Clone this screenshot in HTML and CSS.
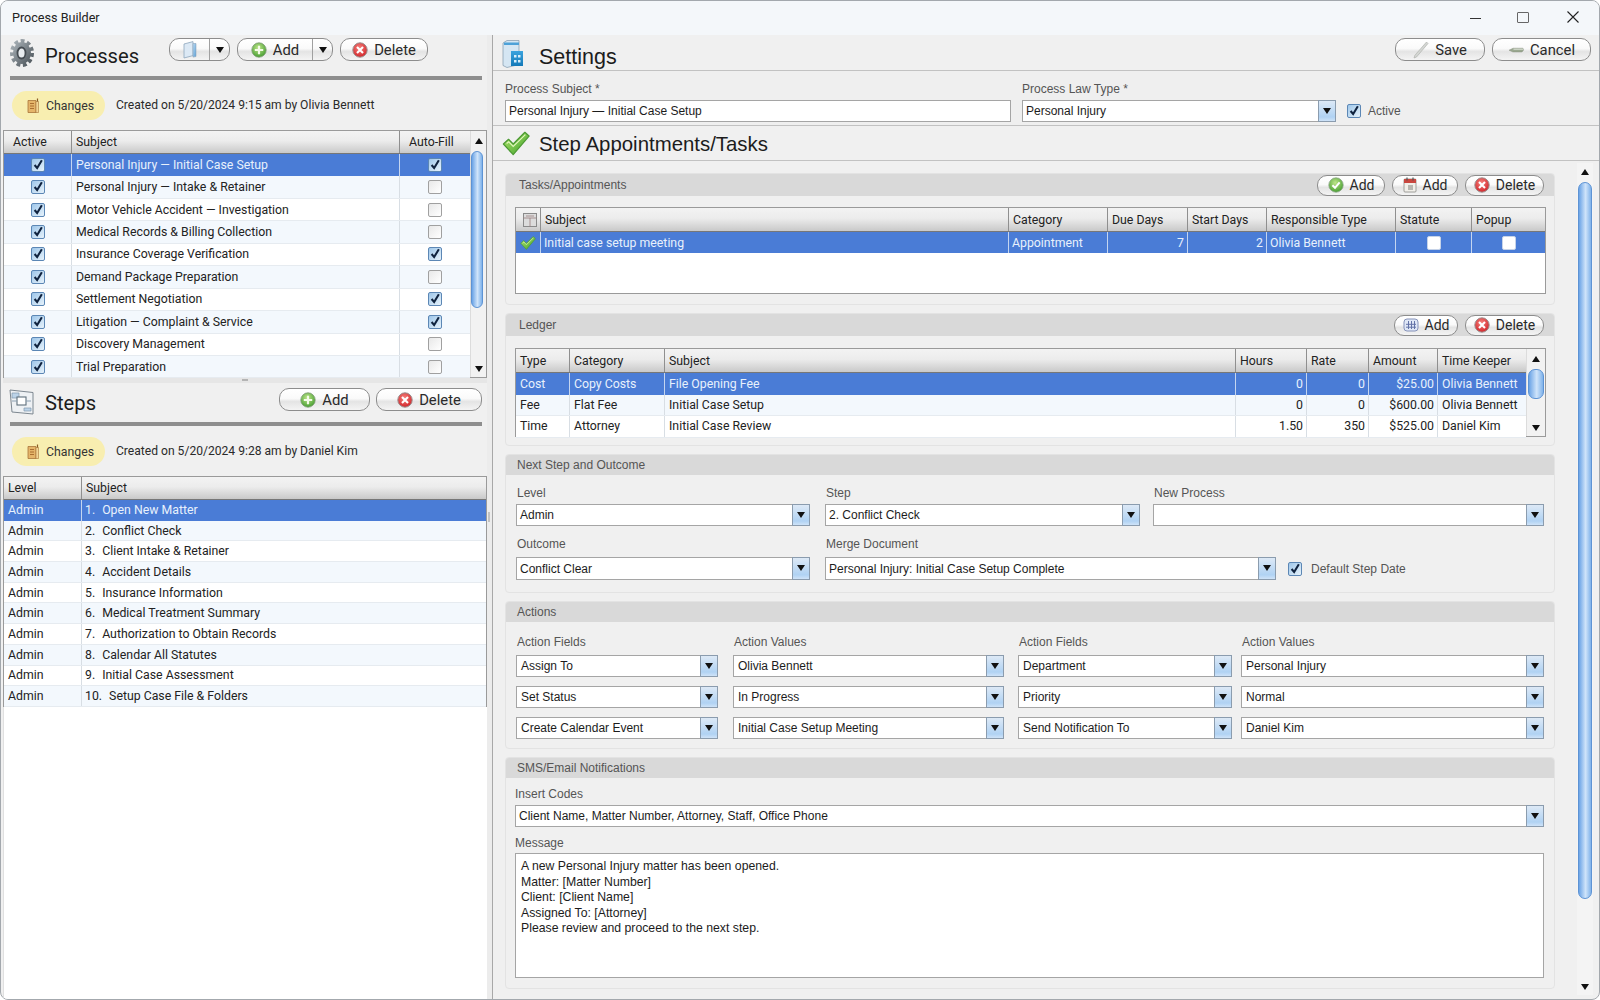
FILE: index.html
```html
<!DOCTYPE html>
<html lang="en">
<head>
  <meta charset="UTF-8" />
  <title>Process Builder</title>
  <link rel="stylesheet" href="styles.css">
</head>
<body>
  <svg class="defs" xmlns="http://www.w3.org/2000/svg">
    <defs>
      <radialGradient id="gGreen" cx="45%" cy="35%" r="70%"><stop offset="0" stop-color="#bfe58a"/><stop offset="1" stop-color="#3f9a2c"/></radialGradient>
      <radialGradient id="gRed" cx="45%" cy="35%" r="70%"><stop offset="0" stop-color="#f5817c"/><stop offset="1" stop-color="#cf1f25"/></radialGradient>
      <linearGradient id="gCheck" x1="0" y1="0" x2="1" y2="1"><stop offset="0" stop-color="#b4e86c"/><stop offset="1" stop-color="#3c9e2a"/></linearGradient>
      <linearGradient id="gGear" x1="0" y1="0" x2="1" y2="1"><stop offset="0" stop-color="#a9b2b8"/><stop offset="1" stop-color="#4e565c"/></linearGradient>
      <linearGradient id="gBlue" x1="0" y1="0" x2="1" y2="1"><stop offset="0" stop-color="#bcdcf4"/><stop offset="1" stop-color="#5a9fd6"/></linearGradient>
      <linearGradient id="gPanel" x1="0" y1="0" x2="0" y2="1"><stop offset="0" stop-color="#3aa3de"/><stop offset="1" stop-color="#1479b8"/></linearGradient>
      <symbol id="i-plus" viewBox="0 0 16 16"><circle cx="8" cy="8" r="7.2" fill="url(#gGreen)" stroke="#7d9a74" stroke-width=".8"/><path d="M8 3.8v8.4M3.8 8h8.4" stroke="#f4fbe9" stroke-width="2.2"/></symbol>
      <symbol id="i-del" viewBox="0 0 16 16"><circle cx="8" cy="8" r="7.2" fill="url(#gRed)" stroke="#9a8f8f" stroke-width="1"/><path d="M5 5l6 6M11 5l-6 6" stroke="#fff" stroke-width="2.1"/></symbol>
      <symbol id="i-okc" viewBox="0 0 16 16"><circle cx="8" cy="8" r="7.2" fill="url(#gGreen)" stroke="#8aa585" stroke-width=".8"/><path d="M4.4 8.2l2.600 2.600 4.600-5.400" fill="none" stroke="#fff" stroke-width="2"/></symbol>
      <symbol id="i-book" viewBox="0 0 16 18"><path d="M2 3l9-2.400v14L2 17z" fill="#dce9f5" stroke="#8ea6bd" stroke-width=".8"/><path d="M11 2.500h3v13l-3 .6z" fill="url(#gBlue)" stroke="#8ea6bd" stroke-width=".6"/></symbol>
      <symbol id="i-scroll" viewBox="0 0 14 16"><path d="M2 2.500h8v12H2z" fill="#e5b56a" stroke="#a8753a" stroke-width=".8"/><path d="M10 3.500h2.500v11H10z" fill="#f3d697" stroke="#a8753a" stroke-width=".6"/><path d="M4 5.500h4M4 8h4M4 10.500h4" stroke="#a3662a" stroke-width=".9"/><path d="M11.500 .5v3" stroke="#8a5a25" stroke-width="1.200"/></symbol>
      <symbol id="i-pencil" viewBox="0 0 16 18"><path d="M13.500 1L15 2.500 3.500 16 1 17l.8-2.600z" fill="#d4d6d3" stroke="#a9aca8" stroke-width=".6"/></symbol>
      <symbol id="i-cancel" viewBox="0 0 16 8"><path d="M1 4.200L5 2.200h10l.5 2L14 6H5z" fill="#9aa890" stroke="#7d8776" stroke-width=".4"/><path d="M5.500 3.200H15" stroke="#e7ebe2" stroke-width=".9"/></symbol>
      <symbol id="i-cal" viewBox="0 0 14 16"><rect x="1" y="2" width="12" height="13" rx="1" fill="#f1efe9" stroke="#8c8a85" stroke-width=".8"/><rect x="1" y="2" width="12" height="4" fill="#c9473f"/><path d="M4 .6v3M10 .6v3" stroke="#555" stroke-width="1.200"/><rect x="5" y="8" width="5" height="5" fill="#b8b7b1"/></symbol>
      <symbol id="i-grid" viewBox="0 0 16 16"><rect x="1" y="2" width="14" height="12" rx="3" fill="#dfe7f6" stroke="#8693ba" stroke-width="1"/><path d="M5.500 4v8M8.500 4v8M11.500 4v8M3 7.300h10M3 10.200h10" stroke="#6474a8" stroke-width="1"/></symbol>
      <symbol id="i-check" viewBox="0 0 30 26"><path d="M1.500 13.500L7 8.500l5 5L24.500 1 29 5 12 25z" fill="url(#gCheck)" stroke="#4d9a34" stroke-width="1.300" stroke-linejoin="round"/><path d="M5 13l2.200-1.800 4.800 5L25 3.500" fill="none" stroke="#e2f8bd" stroke-width="1.200"/></symbol>
      <symbol id="i-gear" viewBox="0 0 26 30"><ellipse cx="13" cy="15" rx="9.500" ry="11.500" fill="none" stroke="url(#gGear)" stroke-width="5" stroke-dasharray="3.600 2.400"/><ellipse cx="13" cy="15" rx="9" ry="11" fill="url(#gGear)"/><ellipse cx="12.500" cy="15" rx="4" ry="5.500" fill="#e8ecef" stroke="#454c52" stroke-width="1.800"/></symbol>
      <symbol id="i-steps" viewBox="0 0 26 28"><path d="M1 2l23 2.500V26L3 24z" fill="#eef1f4" stroke="#7d8790" stroke-width="1"/><path d="M3 5h7v5H3zM15 20h7v3h-7z" fill="#bcd3e8" stroke="#8299ad" stroke-width=".7"/><rect x="8" y="9" width="9" height="8" fill="#fff" stroke="#5f6f7c" stroke-width="1.100"/><path d="M3 13h5M17 13h5" stroke="#8ca0b2" stroke-width="1"/></symbol>
      <symbol id="i-settings" viewBox="0 0 22 28"><path d="M1 3l4-2.500h12v24l-12 3-4-2z" fill="#d5e6f3" stroke="#7e97ab" stroke-width=".7"/><path d="M2 2.500h15v2.500H2z" fill="#4da1d8"/><rect x="9" y="11" width="12" height="15" fill="url(#gPanel)"/><path d="M12 15h2.500v2.500H12zM16 15h2.500v2.500H16zM12 20h2.500v2.500H12zM16 20h2.500v2.500H16z" fill="#d9eefb"/></symbol>
      <symbol id="i-tick" viewBox="0 0 14 14"><path d="M3 7l3 3.500L11.500 1.500" fill="none" stroke="#10233f" stroke-width="2.400"/></symbol>
      <symbol id="i-head" viewBox="0 0 16 16"><rect x="1.500" y="1.500" width="13" height="13" fill="#dcdcdc" stroke="#8a8a8a"/><path d="M1.500 6h13M8 6v8.500M4 4h8" stroke="#9a7f7f" stroke-width=".8"/></symbol>
    </defs>
  </svg>

  <div class="window">
    <div class="titlebar">
      <span class="app-title">Process Builder</span>
      <div class="win-btns">
        <span class="win-min"></span>
        <span class="win-max"></span>
        <svg class="win-close" viewBox="0 0 12 12"><path d="M.5.500l11 11M11.500.5l-11 11" stroke="#222" stroke-width="1.100"/></svg>
      </div>
    </div>

    <div class="content">
      <div class="left">
        <div class="proc-head">
          <svg class="head-icon"><use href="#i-gear"/></svg>
          <h1 class="title">Processes</h1>
          <div class="head-btns">
            <span class="btn btn-book"><span class="btn-main"><svg class="ic16 tall"><use href="#i-book"/></svg></span><span class="btn-drop"><i class="tri-down"></i></span></span>
            <span class="btn btn-add"><span class="btn-main"><svg class="ic16"><use href="#i-plus"/></svg>Add</span><span class="btn-drop"><i class="tri-down"></i></span></span>
            <span class="btn btn-del"><span class="btn-main"><svg class="ic16"><use href="#i-del"/></svg>Delete</span></span>
          </div>
        </div>
        <div class="rule"></div>
        <div class="changes">
          <span class="pill"><svg class="ic-scroll"><use href="#i-scroll"/></svg>Changes</span>
          <span class="created">Created on 5/20/2024 9:15 am by Olivia Bennett</span>
        </div>

        <div class="grid-box proc-grid">
          <div class="grid-main">
            <div class="row head"><span class="c">Active</span><span class="c">Subject</span><span class="c">Auto-Fill</span></div>
            <div class="row sel"><span class="c center"><i class="cb on"><svg><use href="#i-tick"/></svg></i></span><span class="c">Personal Injury — Initial Case Setup</span><span class="c center"><i class="cb on"><svg><use href="#i-tick"/></svg></i></span></div>
            <div class="row"><span class="c center"><i class="cb on"><svg><use href="#i-tick"/></svg></i></span><span class="c">Personal Injury — Intake &amp; Retainer</span><span class="c center"><i class="cb"></i></span></div>
            <div class="row"><span class="c center"><i class="cb on"><svg><use href="#i-tick"/></svg></i></span><span class="c">Motor Vehicle Accident — Investigation</span><span class="c center"><i class="cb"></i></span></div>
            <div class="row"><span class="c center"><i class="cb on"><svg><use href="#i-tick"/></svg></i></span><span class="c">Medical Records &amp; Billing Collection</span><span class="c center"><i class="cb"></i></span></div>
            <div class="row"><span class="c center"><i class="cb on"><svg><use href="#i-tick"/></svg></i></span><span class="c">Insurance Coverage Verification</span><span class="c center"><i class="cb on"><svg><use href="#i-tick"/></svg></i></span></div>
            <div class="row"><span class="c center"><i class="cb on"><svg><use href="#i-tick"/></svg></i></span><span class="c">Demand Package Preparation</span><span class="c center"><i class="cb"></i></span></div>
            <div class="row"><span class="c center"><i class="cb on"><svg><use href="#i-tick"/></svg></i></span><span class="c">Settlement Negotiation</span><span class="c center"><i class="cb on"><svg><use href="#i-tick"/></svg></i></span></div>
            <div class="row"><span class="c center"><i class="cb on"><svg><use href="#i-tick"/></svg></i></span><span class="c">Litigation — Complaint &amp; Service</span><span class="c center"><i class="cb on"><svg><use href="#i-tick"/></svg></i></span></div>
            <div class="row"><span class="c center"><i class="cb on"><svg><use href="#i-tick"/></svg></i></span><span class="c">Discovery Management</span><span class="c center"><i class="cb"></i></span></div>
            <div class="row"><span class="c center"><i class="cb on"><svg><use href="#i-tick"/></svg></i></span><span class="c">Trial Preparation</span><span class="c center"><i class="cb"></i></span></div>
          </div>
          <div class="vscroll">
            <span class="arrow arrow-head"><i class="tri-up"></i></span>
            <div class="track"><div class="thumb"></div></div>
            <span class="arrow"><i class="tri-down"></i></span>
          </div>
        </div>

        <div class="h-split"><i></i></div>

        <div class="steps-head">
          <svg class="head-icon"><use href="#i-steps"/></svg>
          <h1 class="title">Steps</h1>
          <div class="head-btns">
            <span class="btn btn-sadd"><span class="btn-main"><svg class="ic16"><use href="#i-plus"/></svg>Add</span></span>
            <span class="btn btn-sdel"><span class="btn-main"><svg class="ic16"><use href="#i-del"/></svg>Delete</span></span>
          </div>
        </div>
        <div class="rule"></div>
        <div class="changes">
          <span class="pill"><svg class="ic-scroll"><use href="#i-scroll"/></svg>Changes</span>
          <span class="created">Created on 5/20/2024 9:28 am by Daniel Kim</span>
        </div>

        <div class="grid-box steps-grid">
          <div class="grid-main">
            <div class="row head"><span class="c">Level</span><span class="c">Subject</span></div>
            <div class="row sel"><span class="c">Admin</span><span class="c"><b class="num">1.</b>Open New Matter</span></div>
            <div class="row"><span class="c">Admin</span><span class="c"><b class="num">2.</b>Conflict Check</span></div>
            <div class="row"><span class="c">Admin</span><span class="c"><b class="num">3.</b>Client Intake &amp; Retainer</span></div>
            <div class="row"><span class="c">Admin</span><span class="c"><b class="num">4.</b>Accident Details</span></div>
            <div class="row"><span class="c">Admin</span><span class="c"><b class="num">5.</b>Insurance Information</span></div>
            <div class="row"><span class="c">Admin</span><span class="c"><b class="num">6.</b>Medical Treatment Summary</span></div>
            <div class="row"><span class="c">Admin</span><span class="c"><b class="num">7.</b>Authorization to Obtain Records</span></div>
            <div class="row"><span class="c">Admin</span><span class="c"><b class="num">8.</b>Calendar All Statutes</span></div>
            <div class="row"><span class="c">Admin</span><span class="c"><b class="num">9.</b>Initial Case Assessment</span></div>
            <div class="row"><span class="c">Admin</span><span class="c"><b class="num">10.</b>Setup Case File &amp; Folders</span></div>
          </div>
        </div>
        <div class="left-fill"></div>
      </div>

      <div class="v-split"><i></i></div>

      <div class="right">
        <div class="set-head">
          <svg class="set-icon"><use href="#i-settings"/></svg>
          <h1 class="title">Settings</h1>
          <div class="set-btns">
            <span class="btn btn-save"><span class="btn-main"><svg class="ic16 tall"><use href="#i-pencil"/></svg>Save</span></span>
            <span class="btn btn-cancel"><span class="btn-main"><svg class="ic-cancel"><use href="#i-cancel"/></svg>Cancel</span></span>
          </div>
        </div>
        <div class="set-form">
          <div class="field f-subject">
            <label>Process Subject *</label>
            <div class="select"><span class="sel-text">Personal Injury — Initial Case Setup</span></div>
          </div>
          <div class="field f-law">
            <label>Process Law Type *</label>
            <div class="select"><span class="sel-text">Personal Injury</span><span class="sel-arrow"><i class="tri-down"></i></span></div>
          </div>
          <div class="check-label"><i class="cb on"><svg><use href="#i-tick"/></svg></i>Active</div>
        </div>
        <div class="step-head">
          <svg class="step-icon"><use href="#i-check"/></svg>
          <h1 class="title">Step Appointments/Tasks</h1>
        </div>

        <div class="scroll-area">
          <div class="groups">
            <section class="group g-tasks">
              <div class="group-head">
                <span class="group-name name-in">Tasks/Appointments</span>
                <div class="group-btns">
                  <span class="btn b-okadd"><span class="btn-main"><svg class="ic16"><use href="#i-okc"/></svg>Add</span></span>
                  <span class="btn b-caladd"><span class="btn-main"><svg class="ic-cal"><use href="#i-cal"/></svg>Add</span></span>
                  <span class="btn b-gdel"><span class="btn-main"><svg class="ic16"><use href="#i-del"/></svg>Delete</span></span>
                </div>
              </div>
              <div class="grid-box tasks-grid">
                <div class="grid-main">
                  <div class="row head"><span class="c center"><svg class="ic16"><use href="#i-head"/></svg></span><span class="c">Subject</span><span class="c">Category</span><span class="c">Due Days</span><span class="c">Start Days</span><span class="c">Responsible Type</span><span class="c">Statute</span><span class="c">Popup</span></div>
                  <div class="row sel"><span class="c center"><svg class="ic16"><use href="#i-check"/></svg></span><span class="c">Initial case setup meeting</span><span class="c">Appointment</span><span class="c num-cell">7</span><span class="c num-cell">2</span><span class="c">Olivia Bennett</span><span class="c center"><i class="cb plain"></i></span><span class="c center"><i class="cb plain"></i></span></div>
                </div>
              </div>
            </section>

            <section class="group g-ledger">
              <div class="group-head">
                <span class="group-name name-in">Ledger</span>
                <div class="group-btns">
                  <span class="btn b-gridadd"><span class="btn-main"><svg class="ic16"><use href="#i-grid"/></svg>Add</span></span>
                  <span class="btn b-gdel"><span class="btn-main"><svg class="ic16"><use href="#i-del"/></svg>Delete</span></span>
                </div>
              </div>
              <div class="grid-box ledger-grid">
                <div class="grid-main">
                  <div class="row head"><span class="c">Type</span><span class="c">Category</span><span class="c">Subject</span><span class="c">Hours</span><span class="c">Rate</span><span class="c">Amount</span><span class="c">Time Keeper</span></div>
                  <div class="row sel"><span class="c">Cost</span><span class="c">Copy Costs</span><span class="c">File Opening Fee</span><span class="c num-cell">0</span><span class="c num-cell">0</span><span class="c num-cell">$25.00</span><span class="c">Olivia Bennett</span></div>
                  <div class="row"><span class="c">Fee</span><span class="c">Flat Fee</span><span class="c">Initial Case Setup</span><span class="c num-cell">0</span><span class="c num-cell">0</span><span class="c num-cell">$600.00</span><span class="c">Olivia Bennett</span></div>
                  <div class="row"><span class="c">Time</span><span class="c">Attorney</span><span class="c">Initial Case Review</span><span class="c num-cell">1.50</span><span class="c num-cell">350</span><span class="c num-cell">$525.00</span><span class="c">Daniel Kim</span></div>
                </div>
                <div class="vscroll">
                  <span class="arrow arrow-head"><i class="tri-up"></i></span>
                  <div class="track"><div class="thumb"></div></div>
                  <span class="arrow"><i class="tri-down"></i></span>
                </div>
              </div>
            </section>

            <section class="group g-next">
              <div class="group-head"><span class="group-name">Next Step and Outcome</span></div>
              <div class="next-row row-one">
                <div class="field n-level"><label>Level</label><div class="select"><span class="sel-text">Admin</span><span class="sel-arrow"><i class="tri-down"></i></span></div></div>
                <div class="field n-step"><label>Step</label><div class="select"><span class="sel-text">2. Conflict Check</span><span class="sel-arrow"><i class="tri-down"></i></span></div></div>
                <div class="field n-new"><label>New Process</label><div class="select"><span class="sel-text"></span><span class="sel-arrow"><i class="tri-down"></i></span></div></div>
              </div>
              <div class="next-row row-two">
                <div class="field n-level"><label>Outcome</label><div class="select"><span class="sel-text">Conflict Clear</span><span class="sel-arrow"><i class="tri-down"></i></span></div></div>
                <div class="field n-merge"><label>Merge Document</label><div class="select"><span class="sel-text">Personal Injury: Initial Case Setup Complete</span><span class="sel-arrow"><i class="tri-down"></i></span></div></div>
                <div class="check-label"><i class="cb on"><svg><use href="#i-tick"/></svg></i>Default Step Date</div>
              </div>
            </section>

            <section class="group g-actions">
              <div class="group-head"><span class="group-name">Actions</span></div>
              <div class="action-grid action-labels">
                <label>Action Fields</label><label>Action Values</label><label>Action Fields</label><label>Action Values</label>
              </div>
              <div class="action-grid">
                <div class="select a1"><span class="sel-text">Assign To</span><span class="sel-arrow"><i class="tri-down"></i></span></div>
                <div class="select a2"><span class="sel-text">Olivia Bennett</span><span class="sel-arrow"><i class="tri-down"></i></span></div>
                <div class="select a3"><span class="sel-text">Department</span><span class="sel-arrow"><i class="tri-down"></i></span></div>
                <div class="select"><span class="sel-text">Personal Injury</span><span class="sel-arrow"><i class="tri-down"></i></span></div>
                <div class="select a1"><span class="sel-text">Set Status</span><span class="sel-arrow"><i class="tri-down"></i></span></div>
                <div class="select a2"><span class="sel-text">In Progress</span><span class="sel-arrow"><i class="tri-down"></i></span></div>
                <div class="select a3"><span class="sel-text">Priority</span><span class="sel-arrow"><i class="tri-down"></i></span></div>
                <div class="select"><span class="sel-text">Normal</span><span class="sel-arrow"><i class="tri-down"></i></span></div>
                <div class="select a1"><span class="sel-text">Create Calendar Event</span><span class="sel-arrow"><i class="tri-down"></i></span></div>
                <div class="select a2"><span class="sel-text">Initial Case Setup Meeting</span><span class="sel-arrow"><i class="tri-down"></i></span></div>
                <div class="select a3"><span class="sel-text">Send Notification To</span><span class="sel-arrow"><i class="tri-down"></i></span></div>
                <div class="select"><span class="sel-text">Daniel Kim</span><span class="sel-arrow"><i class="tri-down"></i></span></div>
              </div>
            </section>

            <section class="group g-sms">
              <div class="group-head"><span class="group-name">SMS/Email Notifications</span></div>
              <div class="sms-body">
                <label>Insert Codes</label>
                <div class="select"><span class="sel-text">Client Name, Matter Number, Attorney, Staff, Office Phone</span><span class="sel-arrow"><i class="tri-down"></i></span></div>
                <label class="msg-label">Message</label>
                <div class="message">A new Personal Injury matter has been opened.<br>Matter: [Matter Number]<br>Client: [Client Name]<br>Assigned To: [Attorney]<br>Please review and proceed to the next step.</div>
              </div>
            </section>
          </div>

          <div class="vscroll main-scroll">
            <span class="arrow"><i class="tri-up"></i></span>
            <div class="track"><div class="thumb"></div></div>
            <span class="arrow"><i class="tri-down"></i></span>
          </div>
        </div>
      </div>
    </div>
  </div>
</body>
</html>
```

FILE: styles.css
```css
* {
  box-sizing: border-box;
}

html, body {
  margin: 0;
  height: 100%;
  background: #fff;
}

body {
  font-family: Roboto, "Noto Sans", sans-serif;
  font-size: 12.3px;
  color: #1e1e1e;
  overflow: hidden;
}

.defs {
  display: block;
  width: 0;
  height: 0;
}

.window {
  width: 1600px;
  height: 1000px;
  border: 1px solid #a3a8ad;
  border-radius: 8px;
  overflow: hidden;
  display: flex;
  flex-direction: column;
  background: #f0f0f0;
}

/* title bar */
.titlebar {
  height: 34px;
  flex: none;
  display: flex;
  align-items: center;
  justify-content: space-between;
  background: #f4f7fa;
  padding: 0 0 2px 11px;
}

.app-title {
  font-size: 12.6px;
  color: #222;
}

.win-btns {
  display: flex;
  align-items: center;
  padding-right: 20px;
}

.win-min {
  width: 11px;
  height: 1px;
  background: #333;
  margin: 2px 36px 0 0;
}

.win-max {
  width: 12px;
  height: 11px;
  border: 1px solid #666;
  border-radius: 1px;
  margin-right: 38px;
}

.win-close {
  width: 12px;
  height: 12px;
  display: block;
}

.content {
  flex: 1;
  display: flex;
  min-height: 0;
}

/* left column */
.left {
  width: 486px;
  flex: none;
  display: flex;
  flex-direction: column;
  padding-left: 2px;
}

.proc-head, .steps-head {
  display: flex;
  align-items: flex-start;
  flex: none;
}

.proc-head {
  height: 41px;
}

.steps-head {
  height: 39px;
}

.head-icon {
  width: 26px;
  height: 30px;
  margin: 3px 0 0 6px;
  flex: none;
}

.steps-head .head-icon {
  height: 28px;
  margin-top: 5px;
}

.title {
  margin: 0;
  font-size: 20.2px;
  font-weight: 400;
  color: #1c1c1c;
  line-height: 30px;
}

.proc-head .title {
  margin: 6px 0 0 10px;
}

.steps-head .title {
  margin: 5px 0 0 10px;
}

.head-btns {
  display: flex;
  gap: 7px;
  margin-left: auto;
}

.proc-head .head-btns {
  margin: 3px 0 0 auto;
  padding-right: 59px;
}

.steps-head .head-btns {
  margin: 5px 0 0 auto;
  padding-right: 5px;
  gap: 6px;
}

.rule {
  height: 4px;
  flex: none;
  margin: 0 5px 0 7px;
  background: #8e8e8e;
}

.changes {
  height: 50px;
  flex: none;
  display: flex;
  align-items: flex-start;
  padding: 11px 0 0 9px;
}

.pill {
  width: 93px;
  height: 29px;
  border-radius: 15px;
  background: #f8eeb0;
  display: flex;
  align-items: center;
  padding-left: 14px;
  gap: 6px;
  color: #333;
}

.ic-scroll {
  width: 14px;
  height: 16px;
}

.created {
  margin-left: 11px;
  line-height: 29px;
  font-size: 12.1px;
  color: #2a2a2a;
}

/* buttons */
.btn {
  display: flex;
  height: 23px;
  border: 1px solid #8d8d8d;
  border-radius: 10px;
  background: linear-gradient(to bottom, #fff 0%, #fafafa 45%, #e4e4e4 60%, #f4f4f4 100%);
  font-size: 14.8px;
  color: #2a2a2a;
  flex: none;
  overflow: hidden;
}

.btn-main {
  flex: 1;
  display: flex;
  align-items: center;
  justify-content: center;
  gap: 6px;
}

.btn-drop {
  width: 20px;
  border-left: 1px solid #a0a0a0;
  display: flex;
  align-items: center;
  justify-content: center;
}

.ic16 {
  width: 16px;
  height: 16px;
  flex: none;
}

.ic16.tall {
  height: 18px;
}

.ic-cancel {
  width: 16px;
  height: 8px;
}

.ic-cal {
  width: 14px;
  height: 16px;
}

.btn-book { width: 61px; }
.btn-add { width: 96px; }
.btn-del { width: 88px; }
.btn-sadd { width: 91px; }
.btn-sdel { width: 106px; }
.btn-save { width: 90px; }
.btn-cancel { width: 99px; }
.b-okadd { width: 68px; height: 21px; }
.b-caladd { width: 66px; height: 21px; }
.b-gridadd { width: 64px; height: 21px; }
.b-gdel { width: 79px; height: 21px; }

.tri-down, .tri-up {
  display: block;
  width: 0;
  height: 0;
  border-left: 4px solid transparent;
  border-right: 4px solid transparent;
}

.tri-down {
  border-top: 6px solid #111;
}

.tri-up {
  border-bottom: 6px solid #111;
}

/* grids */
.grid-box {
  display: flex;
  flex: none;
  border: 1px solid #9a9a9a;
  background: #fff;
}

.grid-main {
  flex: 1;
  min-width: 0;
}

.row {
  display: grid;
  height: 22.45px;
  background: #fff;
  color: #222;
  border-bottom: 1px solid #e6ebf0;
}

.row:nth-child(odd) {
  background: #f3f8fd;
}

.row.head {
  height: 23px;
  background: linear-gradient(to bottom, #f3f3f3 0%, #ececec 45%, #c9c9c9 100%);
  border-bottom: 1px solid #777;
}

.row.sel {
  background: #4a7cd6;
  color: #e8f1fc;
  border-bottom: none;
}

.c {
  display: flex;
  align-items: center;
  padding-left: 3px;
  border-right: 1px solid #d8dee4;
  white-space: nowrap;
  overflow: hidden;
}

.head .c {
  border-right: 1px solid #8f8f8f;
  padding-left: 4px;
}

.sel .c {
  border-right: 1px solid #c4d5f0;
}

.c:last-child {
  border-right: none;
}

.center {
  justify-content: center;
  padding: 0;
}

.num-cell {
  justify-content: flex-end;
  padding: 0 3px 0 0;
}

.num {
  font-weight: 400;
  margin-right: 7px;
}

.proc-grid {
  width: 484px;
  height: 248px;
}

.proc-grid .row {
  grid-template-columns: 68px 328px 70px;
}

.proc-grid .c:nth-child(2) {
  padding-left: 4px;
}

.proc-grid .head .c:first-child, .proc-grid .head .c:last-child {
  padding-left: 9px;
}

.proc-grid .track {
  padding: 0 3px 0 0;
}

.steps-grid {
  width: 484px;
  border-bottom: none;
}

.steps-grid .row {
  grid-template-columns: 78px 1fr;
  height: 20.7px;
}

.steps-grid .row.head {
  height: 23px;
}

.steps-grid .c:first-child {
  padding-left: 4px;
}

.tasks-grid {
  height: 87px;
}

.tasks-grid .row {
  grid-template-columns: 25px 468px 99px 80px 79px 129px 76px 1fr;
  height: 21px;
}

.tasks-grid .row.head {
  height: 24px;
}

.ledger-grid {
  height: 89px;
}

.ledger-grid .row {
  grid-template-columns: 54px 95px 571px 71px 62px 69px 1fr;
  height: 21.500px;
}

.ledger-grid .row.head {
  height: 24px;
}

.ledger-grid .c {
  padding-left: 4px;
}

.ledger-grid .num-cell {
  padding: 0 3px 0 0;
}

/* checkboxes */
.cb {
  display: block;
  width: 14px;
  height: 14px;
  border: 1px solid #a0a0a0;
  border-radius: 2px;
  background: linear-gradient(135deg, #e8e8e8, #fff);
  flex: none;
}

.cb svg {
  display: block;
  width: 12px;
  height: 12px;
}

.cb.on {
  border-color: #5c87b5;
  background: linear-gradient(135deg, #9fc7ea, #e6f2fb);
}

.cb.plain {
  background: #fff;
  border-color: #c6d3e8;
}

/* scrollbars */
.vscroll {
  width: 16px;
  flex: none;
  display: flex;
  flex-direction: column;
  background: #f2f2f2;
  border-left: 1px solid #dcdcdc;
}

.arrow {
  height: 17px;
  flex: none;
  display: flex;
  align-items: center;
  justify-content: center;
}

.arrow-head {
  height: 20px;
}

.track {
  flex: 1;
  padding: 0 1px;
}

.thumb {
  height: 157px;
  border-radius: 7px;
  border: 1px solid #5d93d4;
  background: linear-gradient(to right, #6aa3e6, #cfe4fa 55%, #7fb2ea);
}

.ledger-grid .vscroll {
  width: 19px;
}

.ledger-grid .thumb {
  height: 30px;
}

/* splitters */
.h-split {
  height: 5px;
  flex: none;
  background: #e6e6e6;
  display: flex;
  justify-content: center;
}

.h-split i {
  width: 6px;
  height: 2px;
  margin-top: 1px;
  background: #b4b4b4;
}

.left-fill {
  flex: 1;
  width: 484px;
  background: #fff;
  border-left: 1px solid #e0e0e0;
}

.v-split {
  width: 6px;
  flex: none;
  border-right: 1px solid #a8a8a8;
  background: #ececec;
  display: flex;
  align-items: center;
}

.v-split i {
  width: 2px;
  height: 10px;
  margin-left: 1px;
  background: #c2c2c2;
}

/* right column */
.right {
  flex: 1;
  min-width: 0;
  display: flex;
  flex-direction: column;
  font-family: "Liberation Sans", Arial, sans-serif;
  font-size: 12px;
}

.set-head {
  height: 36px;
  flex: none;
  display: flex;
  align-items: flex-start;
  border-bottom: 1px solid #c2c2c2;
}

.set-icon {
  width: 22px;
  height: 28px;
  margin: 5px 0 0 9px;
  flex: none;
}

.set-head .title, .step-head .title {
  font-family: "Liberation Sans", Arial, sans-serif;
}

.set-head .title {
  font-size: 21.500px;
  margin: 7px 0 0 15px;
}

.set-btns {
  margin: 3px 8px 0 auto;
  display: flex;
  gap: 7px;
  font-family: Roboto, sans-serif;
}

.set-form {
  height: 55px;
  flex: none;
  display: flex;
  padding: 11px 0 0 12px;
  border-bottom: 1px solid #c2c2c2;
  background: #efefef;
}

.field {
  display: flex;
  flex-direction: column;
}

label {
  display: block;
  color: #555;
  font-size: 12px;
  line-height: 14px;
}

.field label {
  padding-left: 1px;
  margin-bottom: 4px;
}

.set-form .field label {
  padding-left: 0;
}

.f-subject {
  width: 506px;
  margin-right: 11px;
}

.f-law {
  width: 314px;
  margin-right: 11px;
}

.select {
  height: 22px;
  display: flex;
  border: 1px solid #a5a5a5;
  background: #fff;
  flex: none;
}

.sel-text {
  flex: 1;
  min-width: 0;
  display: flex;
  align-items: center;
  padding-left: 3px;
  font-size: 12px;
  color: #1c1c1c;
  white-space: nowrap;
}

.sel-arrow {
  width: 18px;
  flex: none;
  display: flex;
  align-items: flex-start;
  justify-content: center;
  padding-top: 7px;
  margin: -1px -1px -1px 0;
  border: 1px solid #8b9cae;
  background: linear-gradient(to bottom, #dde9f6 0%, #b0d2f3 80%, #cfe3f8 100%);
}

.check-label {
  display: flex;
  align-items: center;
  gap: 7px;
  color: #555;
  font-size: 12px;
}

.set-form .check-label {
  height: 22px;
  margin-top: 18px;
}

.step-head {
  height: 35px;
  flex: none;
  display: flex;
  align-items: center;
  border-bottom: 1px solid #c2c2c2;
}

.step-icon {
  width: 28px;
  height: 25px;
  margin-left: 9px;
  flex: none;
}

.step-head .title {
  font-size: 20.400px;
  margin: 2px 0 0 9px;
}

.scroll-area {
  flex: 1;
  min-height: 0;
  display: flex;
}

.groups {
  width: 1062px;
  padding: 12px 0 0 12px;
  flex: none;
}

.main-scroll {
  width: 16px;
  margin: 2px 0 4px 22px;
  border: none;
  background: #f4f4f4;
}

.main-scroll .thumb {
  height: 717px;
  margin-top: 2px;
}

/* group boxes */
.group {
  width: 1050px;
  border: 1px solid #e3e3e3;
  border-radius: 4px;
  background: #f0f0f0;
  margin-bottom: 8px;
}

.group-head {
  display: flex;
  align-items: center;
  justify-content: space-between;
  background: #d9d9d9;
  border-radius: 3px 3px 0 0;
  color: #555;
  font-size: 12px;
  height: 20px;
  padding-left: 11px;
}

.name-in {
  padding-left: 2px;
}

.group-btns {
  display: flex;
  gap: 7px;
  padding-right: 10px;
  font-family: Roboto, sans-serif;
}

.group-btns .btn {
  font-size: 14px;
}

.g-tasks {
  height: 132px;
}

.g-tasks .group-head, .g-ledger .group-head {
  height: 22px;
}

.g-tasks .grid-box, .g-ledger .grid-box {
  margin: 12px 8px 0 9px;
  font-family: Roboto, sans-serif;
  font-size: 12.3px;
}

.g-tasks .grid-box {
  margin-top: 11px;
}

.g-ledger {
  height: 133px;
}

.g-next {
  height: 139px;
}

.next-row {
  display: flex;
  padding: 11px 0 0 10px;
}

.n-level {
  width: 294px;
  margin-right: 15px;
}

.n-step {
  width: 315px;
  margin-right: 13px;
}

.n-new {
  width: 391px;
}

.n-merge {
  width: 451px;
  margin-right: 12px;
}

.row-two label {
  margin-bottom: 6px;
}

.row-two .select {
  height: 23px;
}

.row-two .check-label {
  margin-top: 20px;
  height: 23px;
  gap: 9px;
}

.g-actions {
  height: 148px;
}

.action-grid {
  display: grid;
  grid-template-columns: 217px 285px 223px 303px;
  grid-auto-rows: 22px;
  row-gap: 9px;
  padding-left: 10px;
}

.action-labels {
  grid-auto-rows: 14px;
  padding-top: 13px;
  margin-bottom: 6px;
}

.action-labels label {
  padding-left: 1px;
}

.action-grid .sel-text {
  padding-left: 4px;
}

.action-grid .select.a1 { margin-right: 15px; }
.action-grid .select.a2 { margin-right: 14px; }
.action-grid .select.a3 { margin-right: 9px; }

.g-sms {
  height: 232px;
}

.sms-body {
  padding: 9px 10px 0 9px;
}

.sms-body label {
  margin-bottom: 4px;
}

.sms-body .msg-label {
  margin: 9px 0 3px;
}

.message {
  height: 125px;
  border: 1px solid #a5a5a5;
  background: #fff;
  padding: 5px 5px;
  font-size: 12.250px;
  line-height: 15.560px;
  color: #1c1c1c;
}
```
